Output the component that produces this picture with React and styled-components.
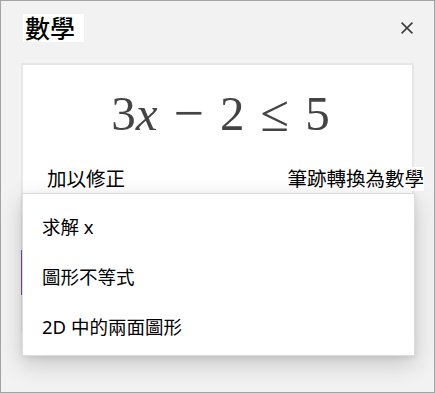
import React from 'react';
import styled, { createGlobalStyle } from 'styled-components';

const GlobalStyle = createGlobalStyle`
  html, body {
    margin: 0;
    padding: 0;
    background: #f2f2f2;
  }
  * {
    box-sizing: border-box;
  }
`

const cjk = `"Noto Sans", "Noto Sans CJK TC", sans-serif`

const Panel = styled.div`
  position: relative;
  width: 435px;
  height: 393px;
  border: 1px solid #a3a3a3;
  background: #f2f2f2;
  padding: 13px 20px 0 20px;
  font-family: ${cjk};
  color: #000;
  overflow: hidden;
`

const Header = styled.div`
  display: flex;
  align-items: center;
  justify-content: space-between;
  height: 28px;
`

const Title = styled.h1`
  margin: 0 0 0 2px;
  padding: 0 9px 0 2px;
  background: #fff;
  font-size: 25px;
  line-height: 28px;
  font-weight: 500;
  font-family: ${cjk};
`

const CloseButton = styled.button`
  display: flex;
  align-items: center;
  justify-content: center;
  width: 20px;
  height: 20px;
  padding: 0;
  margin-right: -3px;
  border: none;
  background: transparent;
  cursor: pointer;
`

const Card = styled.div`
  position: relative;
  margin-top: 21px;
  height: 270px;
  background: #fff;
  border: 2px solid #e6e6e6;
`

const Expression = styled.div`
  margin-top: 18px;
  height: 60px;
  display: flex;
  align-items: center;
  justify-content: center;
  gap: 16px;
  font-family: "Liberation Serif", "DejaVu Serif", serif;
  font-size: 49px;
  color: #444;
  padding-left: 6px;
`

const Var = styled.i`
  font-style: italic;
`

const Operator = styled.span`
  font-size: ${({ $wide }) => ($wide ? '54px' : '52px')};
`

const Actions = styled.div`
  display: flex;
  justify-content: space-between;
  margin: 24px -12px 0 24px;
`

const Action = styled.span`
  background: #fff;
  font-size: 19.5px;
  line-height: 24px;
`

const FocusMark = styled.div`
  position: absolute;
  left: -2px;
  top: 185px;
  width: 2px;
  height: 45px;
  background: #7a4ea3;
`

const Menu = styled.ul`
  position: absolute;
  top: 192px;
  left: 21px;
  width: 393px;
  margin: 0;
  padding: 7px 0 4px;
  list-style: none;
  background: #fff;
  border: 1px solid #dcdcdc;
  box-shadow: 0 8px 22px rgba(0, 0, 0, 0.18), 0 2px 6px rgba(0, 0, 0, 0.08);
`

const MenuItem = styled.li`
  height: 50px;
  display: flex;
  align-items: center;
  padding-left: 19px;
  font-size: 18.5px;
  color: #000;
`

const items = ['求解 x', '圖形不等式', '2D 中的兩面圖形']

export default function App() {
  return (
    <>
      <GlobalStyle />
      <Panel>
        <Header>
          <Title>數學</Title>
          <CloseButton aria-label="關閉">
            <svg width="12" height="12" viewBox="0 0 12 12">
              <path d="M0.6 0.6 L11.4 11.4 M11.4 0.6 L0.6 11.4" stroke="#3a3a3a" strokeWidth="1.5" fill="none" />
            </svg>
          </CloseButton>
        </Header>
        <Card>
          <Expression>
            <span>3<Var>x</Var></span>
            <Operator $wide>−</Operator>
            <span>2</span>
            <Operator>≤</Operator>
            <span>5</span>
          </Expression>
          <Actions>
            <Action>加以修正</Action>
            <Action>筆跡轉換為數學</Action>
          </Actions>
          <FocusMark />
        </Card>
        <Menu>
          {items.map(item => (
            <MenuItem key={item}>{item}</MenuItem>
          ))}
        </Menu>
      </Panel>
    </>
  )
}
